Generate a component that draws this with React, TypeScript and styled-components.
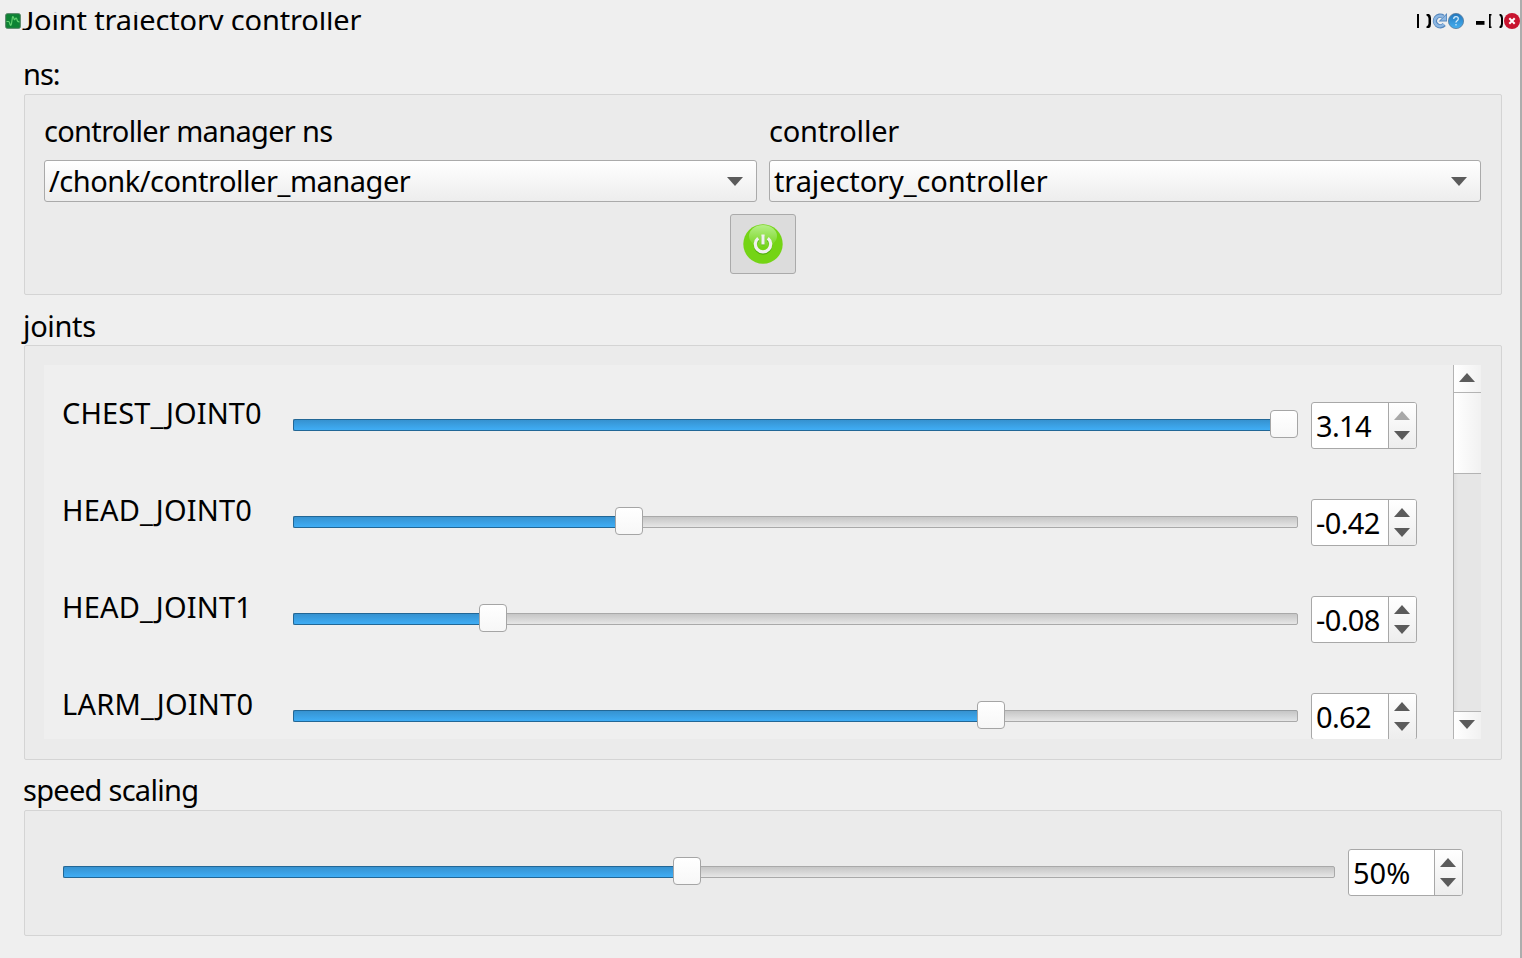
import React from "react";
import styled, { createGlobalStyle } from "styled-components";

const GlobalStyle = createGlobalStyle`
  * { box-sizing: border-box; }
  body { margin: 0; background: #efefef; }
`;

const Window = styled.div`
  width: 1522px;
  height: 958px;
  overflow: hidden;
  background: #efefef;
  border-right: 2px solid #adadad;
  font-family: "Noto Sans", sans-serif;
  font-size: 29px;
  line-height: 40px;
  color: #000;
`;

const TitleBar = styled.header`
  display: flex;
  align-items: flex-start;
  height: 54px;
  padding: 12px 0 0 5px;
`;

const TitleClip = styled.div`
  flex: 1;
  height: 18px;
  overflow: hidden;
  display: flex;
  align-items: center;
  padding: 0 0 2px 1px;
`;

const WindowControls = styled.div`
  display: flex;
  height: 18px;
  align-items: center;
`;

const Text = styled.span<{ $tracking?: number }>`
  white-space: pre;
  letter-spacing: ${(p) => p.$tracking ?? 0}px;
`;

const TitleInitial = styled.span`
  display: inline-block;
  width: 12px;
  font-family: Lato, sans-serif;
`;

const Content = styled.main`
  padding: 0 18px 0 24px;
  display: flex;
  flex-direction: column;
  gap: 10px;
`;

const Section = styled.section``;

const SectionLabel = styled.div<{ $drop?: number }>`
  height: 40px;
  margin-left: -1px;
  padding-top: ${(p) => p.$drop ?? 0}px;
`;

const Panel = styled.div<{ $height: number }>`
  height: ${(p) => p.$height}px;
  border: 1px solid #d4d4d4;
  border-radius: 2px;
  background: #ebebeb;
`;

const NsPanel = styled(Panel)`
  padding: 16px 20px 0 19px;
  display: flex;
  flex-direction: column;
  align-items: center;
  gap: 12px;
`;

const ComboRow = styled.div`
  width: 100%;
  display: grid;
  grid-template-columns: 713px 712px;
  column-gap: 12px;
`;

const Field = styled.div`
  display: flex;
  flex-direction: column;
  gap: 9px;
`;

const Combo = styled.div`
  height: 42px;
  padding: 0 13px 0 4px;
  border: 1px solid #aaa;
  border-radius: 3px;
  background: linear-gradient(#fff, #ededed);
  display: flex;
  align-items: center;
  justify-content: space-between;
`;

const PowerButton = styled.button`
  width: 66px;
  height: 60px;
  padding: 0;
  border: 1px solid #aaa;
  border-radius: 3px;
  background: #dcdcdc;
  display: flex;
  align-items: center;
  justify-content: center;
`;

const JointsPanel = styled(Panel)`
  padding: 19px 20px 0 19px;
`;

const ScrollArea = styled.div`
  height: 374px;
  display: flex;
  overflow: hidden;
  background: #efefef;
`;

const JointList = styled.div`
  flex: 1;
  padding: 12px 36px 0 18px;
`;

const JointRow = styled.div`
  height: 97px;
  display: grid;
  grid-template-columns: 231px 1005px 106px;
  align-items: center;

  & > :last-child {
    margin-left: 13px;
  }
`;

const JointName = styled.div`
  margin-top: -25px;
`;

const SpeedPanel = styled(Panel)`
  padding: 0 38px 2px;
  display: flex;
  align-items: center;
  gap: 13px;
`;

const Track = styled.div<{ $width: number }>`
  width: ${(p) => p.$width}px;
  height: 12px;
  margin-bottom: 1px;
  border: 1px solid #a9a9a9;
  border-radius: 2px;
  background: linear-gradient(#c6c6c6, #e6e6e6);
  display: flex;
  align-items: center;
`;

const Fill = styled.div`
  flex: none;
  height: 12px;
  margin-left: -1px;
  border: 1px solid #226796;
  border-right: 0;
  border-radius: 2px 0 0 2px;
  background: linear-gradient(#3692d0, #3fadf5);
`;

const Thumb = styled.div`
  flex: none;
  width: 28px;
  height: 28px;
  margin-top: -2px;
  border: 1px solid #a5a5a5;
  border-radius: 4px;
  background: linear-gradient(#fff, #f7f7f7);
`;

const SpinFrame = styled.div<{ $width: number }>`
  width: ${(p) => p.$width}px;
  height: 47px;
  border: 1px solid #a8a8a8;
  border-radius: 3px;
  background: #fff;
  display: flex;
  overflow: hidden;
`;

const SpinValue = styled.div`
  flex: 1;
  min-width: 0;
  padding: 3px 0 0 4px;
`;

const SpinButtons = styled.div`
  width: 28px;
  border-left: 1px solid #a8a8a8;
  background: linear-gradient(#fff, #ededed);
  display: flex;
  flex-direction: column;
  align-items: flex-start;
  gap: 11px;
  padding: 8px 0 0 5px;
`;

const ScrollBar = styled.div`
  width: 28px;
  border-left: 1px solid #b3b3b3;
  background: linear-gradient(90deg, #dedede, #e6e6e6 4px);
  display: flex;
  flex-direction: column;
`;

const ScrollButton = styled.div`
  height: 27px;
  padding: 0 2px 2px 0;
  background: linear-gradient(90deg, #fff, #f1f1f1);
  display: flex;
  align-items: center;
  justify-content: center;
`;

const ScrollHandle = styled.div`
  height: 82px;
  border: solid #b3b3b3;
  border-width: 1px 0;
  background: linear-gradient(90deg, #fff, #f1f1f1);
`;

const ScrollGroove = styled.div`
  flex: 1;
  border-bottom: 1px solid #b3b3b3;
`;

const Arrow = ({ up = false, muted = false }: { up?: boolean; muted?: boolean }) => (
  <svg width="16" height="9" viewBox="0 0 16 9" display="block">
    <path d={up ? "M0 9 8 0l8 9z" : "M0 0h16L8 9z"} fill={muted ? "#a8a8a8" : "#5b5b5b"} />
  </svg>
);

const AppIcon = () => (
  <svg width="16" height="18" viewBox="0 0 16 18">
    <rect x=".7" y="1.7" width="14.6" height="14.6" rx="1.5" fill="#0d8334" stroke="#4f7d5f" strokeWidth="1" />
    <path d="M1.500 9.500h2q1 0 1.500 3 .8 2 1.500-1l1-6.500q.8-1.500 1.500 2 .5 1.500 1.500-.5 1-1.500 1.500 1.500.5 2 2.500 1.800" fill="none" stroke="#62d070" strokeWidth="1.200" />
  </svg>
);

const DockControls = () => (
  <svg width="104" height="18" viewBox="1416 12 104 18" display="block">
    <defs>
      <linearGradient id="help" x1="0" y1="0" x2="0" y2="1">
        <stop offset="0" stopColor="#2276bd" />
        <stop offset="1" stopColor="#45b0f0" />
      </linearGradient>
    </defs>
    <path d="M1417 14h2v14h-2z" fill="#000" />
    <path d="M1426.500 14h2.500q2 1 2 4v6q0 3-2 4h-2.500v-1.500q2-1 2-3v-5q0-2-2-3z" fill="#000" />
    <path d="M1444.200 24.500a5.300 5.300 0 1 1-1-8" fill="none" stroke="#5587bd" strokeWidth="4.400" />
    <path d="M1447 13v8.500h-8.500z" fill="#5587bd" />
    <path d="M1443.800 24.200a5.100 5.100 0 1 1-.8-7.200" fill="none" stroke="#8db7e2" strokeWidth="2.600" />
    <path d="M1446.200 15v5.600h-5.600z" fill="#8db7e2" />
    <circle cx="1456" cy="21" r="7.600" fill="url(#help)" stroke="#55799a" strokeWidth=".8" />
    <path d="M1453.700 19q0-2.300 2.300-2.300t2.300 2q0 1.200-1.200 2t-1.100 1.900M1456 24v1.500" fill="none" stroke="#d5ecfb" strokeWidth="1.200" />
    <path d="M1476 21h8.500v3.800h-8.500z" fill="#000" />
    <path d="M1491.500 14h-2.500v14h2.500v-1.500h-.8v-11h.8z" fill="#000" />
    <path d="M1499.500 14h1.500q2 1 2 4v6q0 3-2 4h-1.500v-1.500q1.500-1 1.500-3v-5q0-2-1.500-3z" fill="#000" />
    <circle cx="1512" cy="21" r="8" fill="#c8142f" />
    <path d="m1509.300 18.300 5.400 5.400m0-5.400-5.400 5.400" stroke="#fff" strokeWidth="2" />
  </svg>
);

const PowerIcon = () => (
  <svg width="40" height="40" viewBox="0 0 40 40" display="block">
    <defs>
      <linearGradient id="gloss" x1="0" y1="0" x2="0" y2="1">
        <stop offset="0" stopColor="#b5ef88" />
        <stop offset="1" stopColor="#76d41c" />
      </linearGradient>
    </defs>
    <circle cx="20" cy="20" r="19.700" fill="#74d415" />
    <ellipse cx="20" cy="12" rx="14" ry="11" fill="url(#gloss)" />
    <path d="M15.200 14.700a7.700 7.700 0 1 0 9.600 0M20 11.500v9" transform="translate(0 .8)" fill="none" stroke="#4fae0c" strokeWidth="3.200" />
    <path d="M15.200 14.200a7.700 7.700 0 1 0 9.600 0M20 10.500v10" fill="none" stroke="#f0f0f0" strokeWidth="3.200" />
  </svg>
);

const Slider = ({ width, position }: { width: number; position: number }) => (
  <Track $width={width}>
    <Fill style={{ width: position }} />
    <Thumb />
  </Track>
);

const SpinBox = ({ width, value, tracking, atMax }: { width: number; value: string; tracking?: number; atMax?: boolean }) => (
  <SpinFrame $width={width}>
    <SpinValue><Text $tracking={tracking}>{value}</Text></SpinValue>
    <SpinButtons>
      <Arrow up muted={atMax} />
      <Arrow />
    </SpinButtons>
  </SpinFrame>
);

const joints = [
  { name: "CHEST_JOINT0", position: 977, value: "3.14", tracking: 0.08, atMax: true },
  { name: "HEAD_JOINT0", position: 322, value: "-0.42", tracking: 0.18 },
  { name: "HEAD_JOINT1", position: 186, value: "-0.08", tracking: 0.18 },
  { name: "LARM_JOINT0", position: 684, value: "0.62", tracking: 0.22 },
];

export default function App() {
  return (
    <Window>
      <GlobalStyle />
      <TitleBar>
        <AppIcon />
        <TitleClip>
          <Text $tracking={-0.15}><TitleInitial>J</TitleInitial>oint trajectory controller</Text>
        </TitleClip>
        <WindowControls><DockControls /></WindowControls>
      </TitleBar>
      <Content>
        <Section>
          <SectionLabel><Text $tracking={-1}>ns:</Text></SectionLabel>
          <NsPanel $height={201}>
            <ComboRow>
              <Field>
                <Text $tracking={-0.68}>controller manager ns</Text>
                <Combo><Text $tracking={-0.47}>/chonk/controller_manager</Text><Arrow /></Combo>
              </Field>
              <Field>
                <Text $tracking={-0.2}>controller</Text>
                <Combo><Text $tracking={-0.1}>trajectory_controller</Text><Arrow /></Combo>
              </Field>
            </ComboRow>
            <PowerButton><PowerIcon /></PowerButton>
          </NsPanel>
        </Section>
        <Section>
          <SectionLabel $drop={1}><Text $tracking={-0.35}>joints</Text></SectionLabel>
          <JointsPanel $height={415}>
            <ScrollArea>
              <JointList>
                {joints.map((j) => (
                  <JointRow key={j.name}>
                    <JointName><Text $tracking={j.tracking}>{j.name}</Text></JointName>
                    <Slider width={1005} position={j.position} />
                    <SpinBox width={106} value={j.value} tracking={-0.65} atMax={j.atMax} />
                  </JointRow>
                ))}
              </JointList>
              <ScrollBar>
                <ScrollButton><Arrow up /></ScrollButton>
                <ScrollHandle />
                <ScrollGroove />
                <ScrollButton><Arrow /></ScrollButton>
              </ScrollBar>
            </ScrollArea>
          </JointsPanel>
        </Section>
        <Section>
          <SectionLabel><Text $tracking={-0.72}>speed scaling</Text></SectionLabel>
          <SpeedPanel $height={126}>
            <Slider width={1272} position={610} />
            <SpinBox width={115} value="50%" />
          </SpeedPanel>
        </Section>
      </Content>
    </Window>
  );
}
